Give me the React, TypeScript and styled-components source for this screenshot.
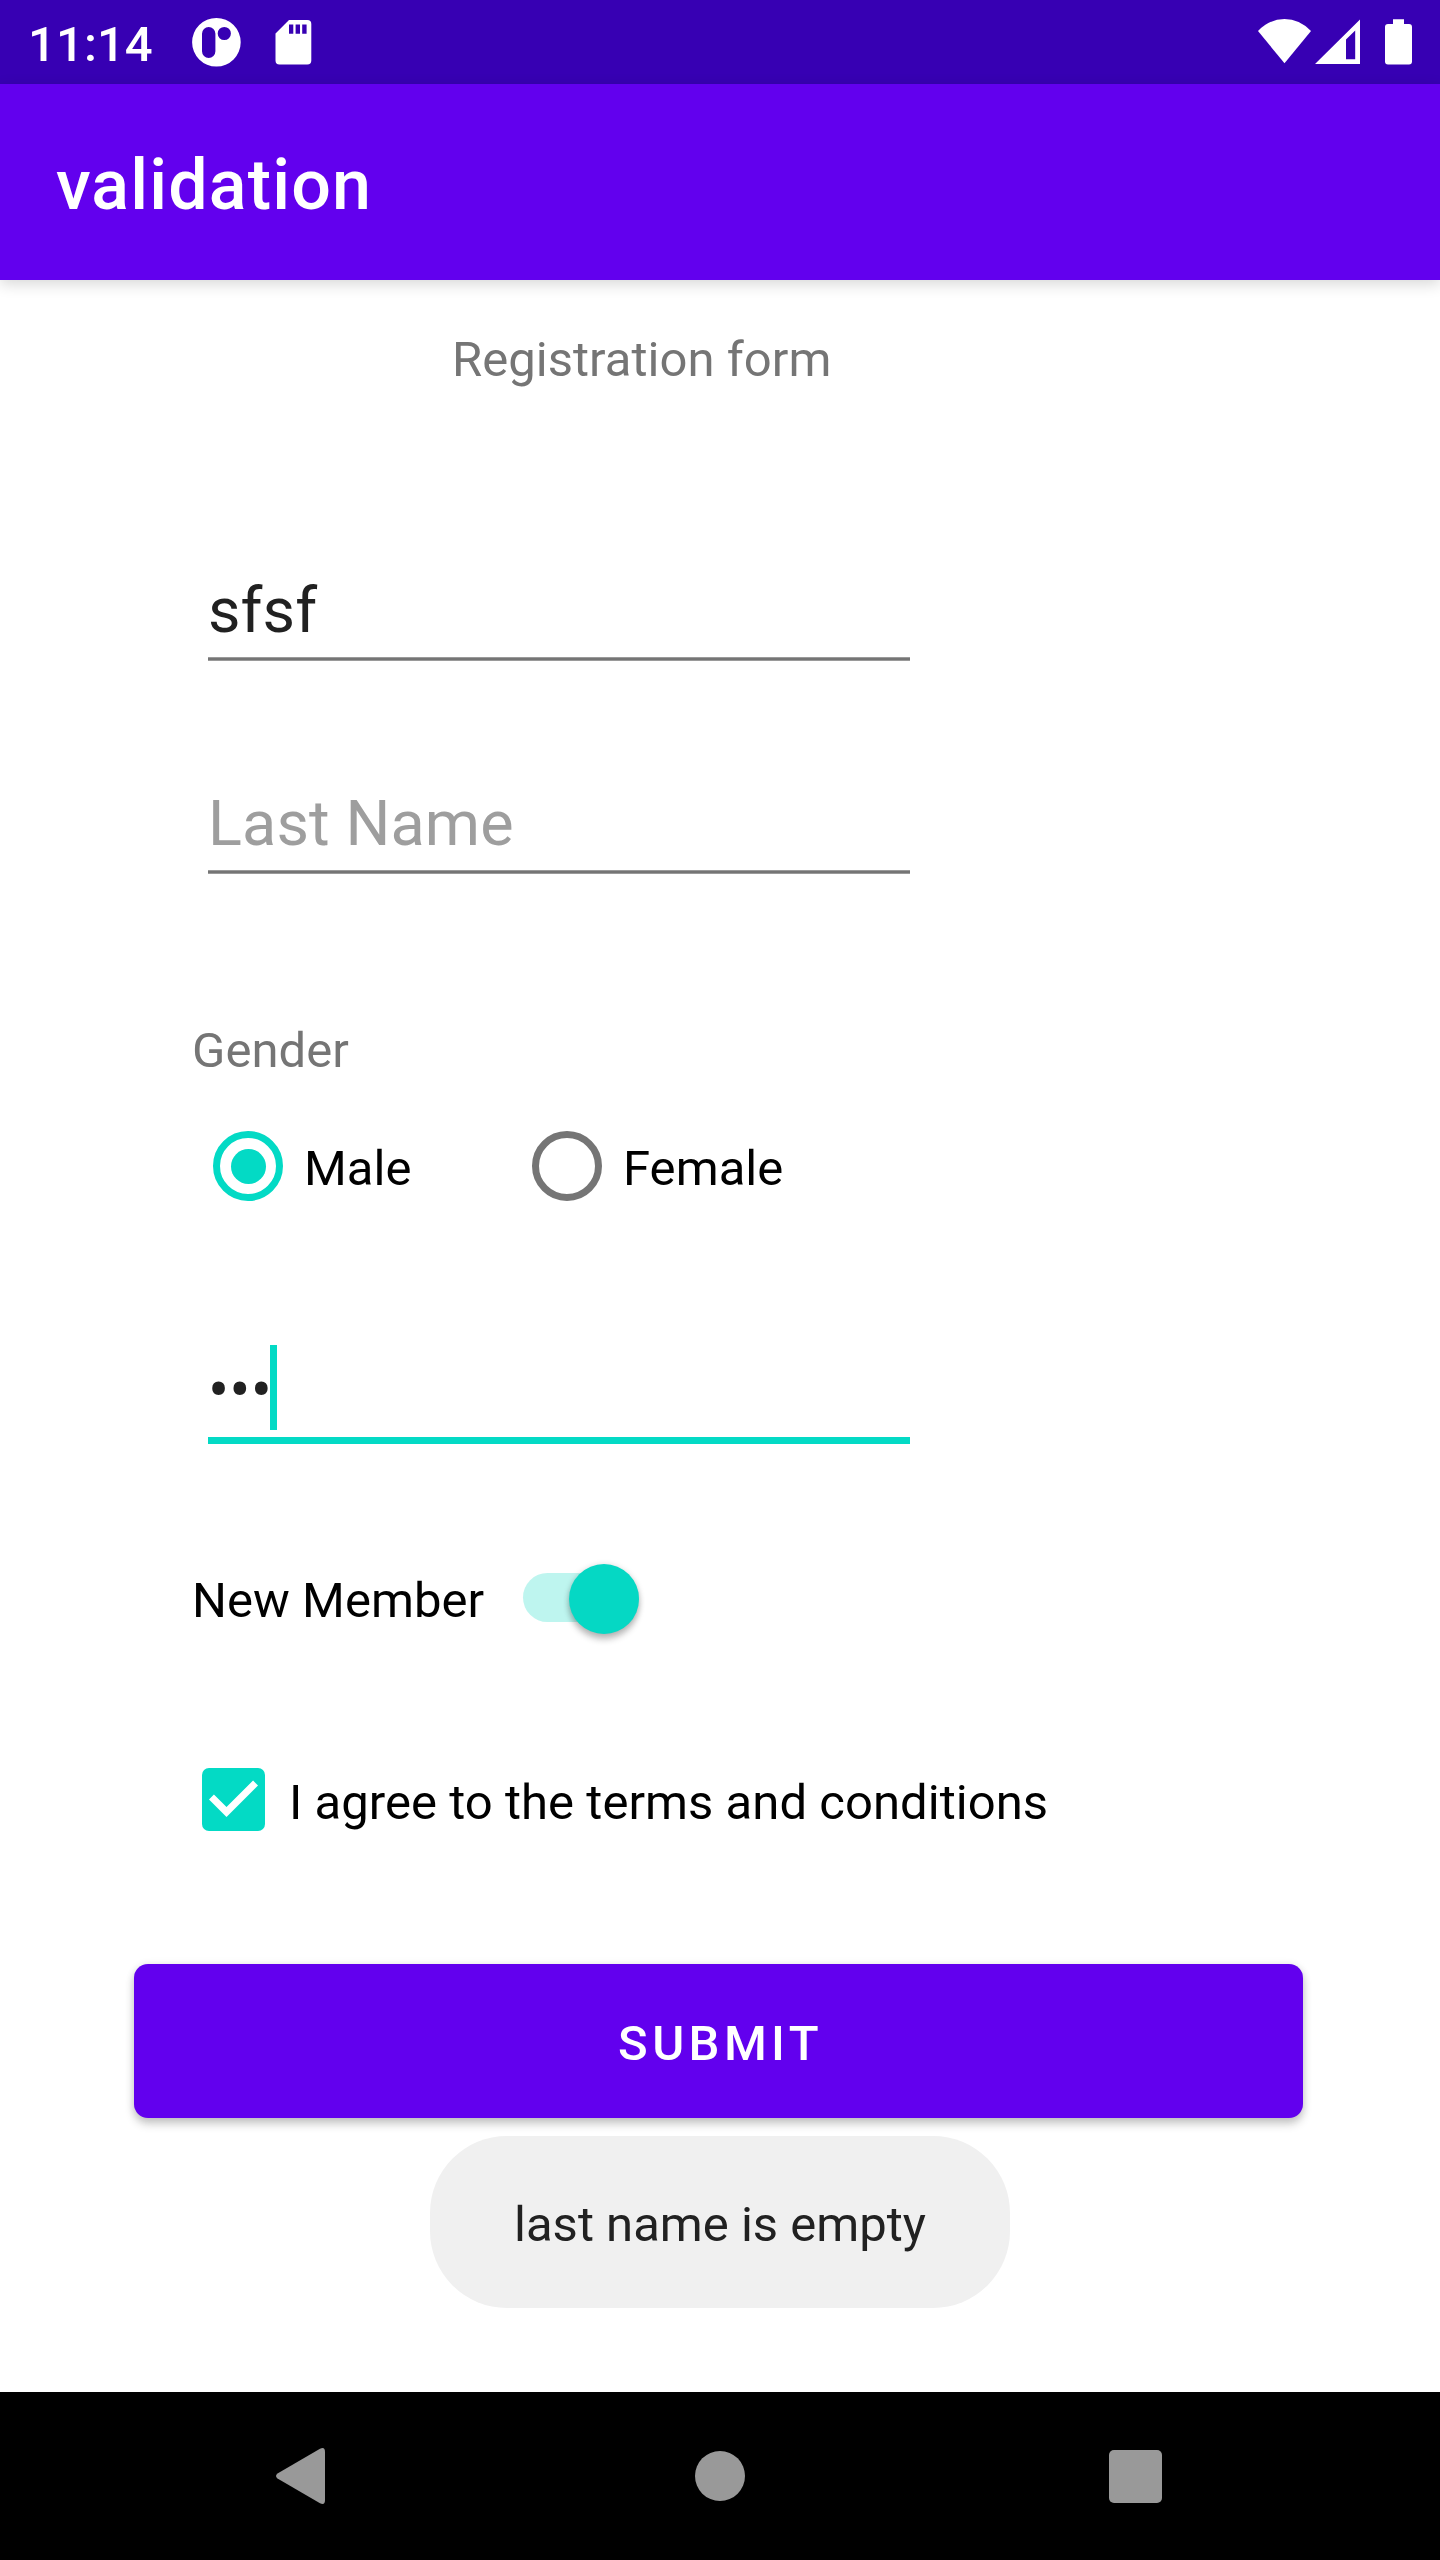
import React from "react";
import styled, { createGlobalStyle } from "styled-components";

const accent = "#03dac5";

const GlobalStyle = createGlobalStyle`
  *, *::before, *::after { box-sizing: border-box; }
  body { margin: 0; background: #fff; }
`;

const Screen = styled.div`
  position: relative;
  display: flex;
  flex-direction: column;
  width: 1440px;
  height: 2560px;
  overflow: hidden;
  background: #fff;
  color: #000;
  font-family: Roboto, "Liberation Sans", sans-serif;
  font-size: 49px;
`;

const StatusBar = styled.header`
  display: flex;
  flex: none;
  justify-content: space-between;
  height: 84px;
  padding: 0 28px;
  background: #3700b3;
  color: #fff;
`;

const StatusGroup = styled.div<{ $gap: number }>`
  display: flex;
  align-items: flex-start;
  gap: ${(p) => p.$gap}px;
`;

const Clock = styled.span`
  width: 128px;
  font-weight: 500;
  line-height: 90px;
  letter-spacing: 0.1px;
  white-space: nowrap;
`;

const StatusIcon = styled.svg`
  display: block;
  flex: none;
  height: 84px;
`;

const AppBar = styled.div`
  flex: none;
  height: 196px;
  padding-left: 56px;
  background: #6200ee;
  box-shadow: 0 4px 14px rgba(0, 0, 0, 0.16);
  color: #fff;
`;

const Title = styled.h1`
  margin: 0;
  font-size: 70px;
  font-weight: 500;
  line-height: 202px;
  letter-spacing: 1.15px;
`;

const Form = styled.main`
  display: flex;
  flex: 1;
  flex-direction: column;
  align-items: flex-start;
  padding-top: 51px;
`;

const Caption = styled.div<{ $top?: number; $left: number }>`
  margin: ${(p) => p.$top ?? 0}px 0 0 ${(p) => p.$left}px;
  color: #757575;
  line-height: 58px;
  letter-spacing: 0.03px;
  white-space: nowrap;
`;

const Field = styled.div<{ $top: number; $line: number }>`
  display: flex;
  align-items: flex-start;
  width: 702px;
  height: 87px;
  margin: ${(p) => p.$top}px 0 0 208px;
  background: linear-gradient(#9a9a9a 0 1px, #757575 1px 3px, #9a9a9a 3px 4px) bottom / 100% 4px no-repeat;
  font-size: 63px;
  line-height: ${(p) => p.$line}px;
`;

const ActiveField = styled(Field)`
  height: 99px;
  background: none;
  border-bottom: 7px solid ${accent};
`;

const FieldText = styled.span<{ $hint?: boolean }>`
  color: ${(p) => (p.$hint ? "#9e9e9e" : "#212121")};
  letter-spacing: 0.1px;
  white-space: nowrap;
`;

const PasswordText = styled(FieldText)`
  width: 62px;
`;

const Caret = styled.span`
  width: 7px;
  height: 85px;
  background: ${accent};
`;

const Row = styled.div<{ $top: number; $left: number; $height: number }>`
  display: flex;
  align-items: flex-start;
  height: ${(p) => p.$height}px;
  margin: ${(p) => p.$top}px 0 0 ${(p) => p.$left}px;
`;

const Label = styled.span<{ $line: number; $left?: number; $width?: number }>`
  width: ${(p) => (p.$width ? `${p.$width}px` : "auto")};
  margin-left: ${(p) => p.$left ?? 0}px;
  line-height: ${(p) => p.$line}px;
  letter-spacing: 0.04px;
  white-space: nowrap;
`;

const Radio = styled.span<{ $checked?: boolean }>`
  display: flex;
  align-items: center;
  justify-content: center;
  width: 70px;
  height: 70px;
  border: 7px solid ${(p) => (p.$checked ? accent : "#757575")};
  border-radius: 50%;
`;

const RadioDot = styled.span`
  width: 35px;
  height: 35px;
  border-radius: 50%;
  background: ${accent};
`;

const Track = styled.span`
  display: flex;
  align-items: center;
  justify-content: flex-end;
  width: 116px;
  height: 49px;
  margin-top: 9px;
  border-radius: 25px;
  background: #bef5ef;
`;

const Thumb = styled.span`
  flex: none;
  width: 70px;
  height: 70px;
  margin-top: 2px;
  border-radius: 50%;
  background: #05d8c4;
  box-shadow: 0 6px 6px rgba(0, 0, 0, 0.2), 0 1px 6px rgba(0, 0, 0, 0.18);
`;

const Checkbox = styled.span`
  width: 63px;
  height: 63px;
  border-radius: 7px;
  background: ${accent};

  svg {
    display: block;
    width: 63px;
    height: 63px;
  }
`;

const SubmitButton = styled.button`
  width: 1169px;
  height: 154px;
  margin: 133px 0 0 134px;
  padding: 0 0 0 4px;
  border: 0;
  border-radius: 14px;
  background: #6200ee;
  box-shadow: 0 6px 10px rgba(0, 0, 0, 0.2), 0 1px 8px rgba(0, 0, 0, 0.1);
  color: #fff;
  font: 500 49px/160px Roboto, "Liberation Sans", sans-serif;
  letter-spacing: 4.375px;
  text-align: center;
`;

const Toast = styled.div`
  position: absolute;
  top: 2136px;
  left: 430px;
  width: 580px;
  height: 172px;
  border-radius: 77px;
  background: #f0f0f0;
  color: #212121;
  line-height: 178px;
  text-align: center;
  white-space: nowrap;
`;

const NavBar = styled.nav`
  display: flex;
  flex: none;
  align-items: center;
  height: 168px;
  padding-left: 276px;
  background: #000;
`;

const BackIcon = styled.svg`
  width: 49px;
  height: 56px;
`;

const HomeIcon = styled.span`
  width: 50px;
  height: 50px;
  margin-left: 370px;
  border-radius: 50%;
  background: #999;
`;

const RecentsIcon = styled.span`
  width: 53px;
  height: 53px;
  margin-left: 363.5px;
  border-radius: 5px;
  background: #999;
`;

export default function App() {
  return (
    <Screen>
      <GlobalStyle />
      <StatusBar>
        <StatusGroup $gap={36}>
          <Clock>11:14</Clock>
          <StatusIcon width="49" viewBox="192 0 49 84" fill="#fff">
            <path
              fillRule="evenodd"
              d="M216.4 18a24.3 24.3 0 1 0 0 48.6a24.3 24.3 0 1 0 0-48.6ZM208.7 27a6.7 6.7 0 0 1 6.7 6.7V51.3a6.7 6.7 0 0 1-13.4 0V33.7a6.7 6.7 0 0 1 6.7-6.7ZM224.3 26.9a6.6 6.6 0 1 1 0 13.2a6.6 6.6 0 1 1 0-13.2Z"
            />
          </StatusIcon>
          <StatusIcon width="37" viewBox="277 0 37 84" overflow="visible" fill="#fff">
            <path
              fillRule="evenodd"
              d="M289 20H307.3a4 4 0 0 1 4 4V60.5a4 4 0 0 1-4 4H279.5a4 4 0 0 1-4-4V33.5ZM289 24.5V33.8H293.3V24.5ZM295.6 24.5V33.8H300V24.5ZM302.2 24.5V33.8H306.6V24.5Z"
            />
          </StatusIcon>
        </StatusGroup>
        <StatusGroup $gap={4}>
          <StatusIcon width="53" viewBox="1258 0 53 84" fill="#fff">
            <path d="M1284.5 63.3L1258 31Q1269.5 19 1284.5 19T1311 31Z" />
          </StatusIcon>
          <StatusIcon width="45" viewBox="1315 0 45 84" fill="#fff">
            <path fillRule="evenodd" d="M1315 64L1360 19.5V64ZM1346 39.5V59.3H1355.2V30.5Z" />
          </StatusIcon>
          <StatusIcon width="48" viewBox="1364 0 48 84" fill="#fff">
            <path d="M1393 19.3H1404V24H1409a3 3 0 0 1 3 3V61.5a3 3 0 0 1-3 3H1388a3 3 0 0 1-3-3V27a3 3 0 0 1 3-3H1393Z" />
          </StatusIcon>
        </StatusGroup>
      </StatusBar>

      <AppBar>
        <Title>validation</Title>
      </AppBar>

      <Form>
        <Caption $left={452}>Registration form</Caption>
        <Field $top={185} $line={73}>
          <FieldText>sfsf</FieldText>
        </Field>
        <Field $top={126} $line={73}>
          <FieldText $hint>Last Name</FieldText>
        </Field>
        <Caption $top={148} $left={192}>
          Gender
        </Caption>
        <Row $top={51} $left={213} $height={70}>
          <Radio $checked>
            <RadioDot />
          </Radio>
          <Label $line={76} $left={21} $width={228}>
            Male
          </Label>
          <Radio />
          <Label $line={76} $left={21}>
            Female
          </Label>
        </Row>
        <ActiveField $top={144} $line={92}>
          <PasswordText>•••</PasswordText>
          <Caret />
        </ActiveField>
        <Row $top={120} $left={192} $height={70}>
          <Label $line={74} $width={331}>
            New Member
          </Label>
          <Track>
            <Thumb />
          </Track>
        </Row>
        <Row $top={134} $left={201.5} $height={63}>
          <Checkbox>
            <svg viewBox="3 3 18 18" fill="#fff">
              <path d="M10 17L5 12L6.41 10.59L10 14.17L17.59 6.58L19 8Z" />
            </svg>
          </Checkbox>
          <Label $line={70} $left={24.5}>
            I agree to the terms and conditions
          </Label>
        </Row>
        <SubmitButton>SUBMIT</SubmitButton>
      </Form>

      <Toast>last name is empty</Toast>

      <NavBar>
        <BackIcon viewBox="0 0 49 56" fill="#999">
          <path d="M1.5 25.5L44 0.8Q49-1.5 49 4V52Q49 57.5 44 55.2L1.5 30.5Q-1.5 28 1.5 25.5Z" />
        </BackIcon>
        <HomeIcon />
        <RecentsIcon />
      </NavBar>
    </Screen>
  );
}
